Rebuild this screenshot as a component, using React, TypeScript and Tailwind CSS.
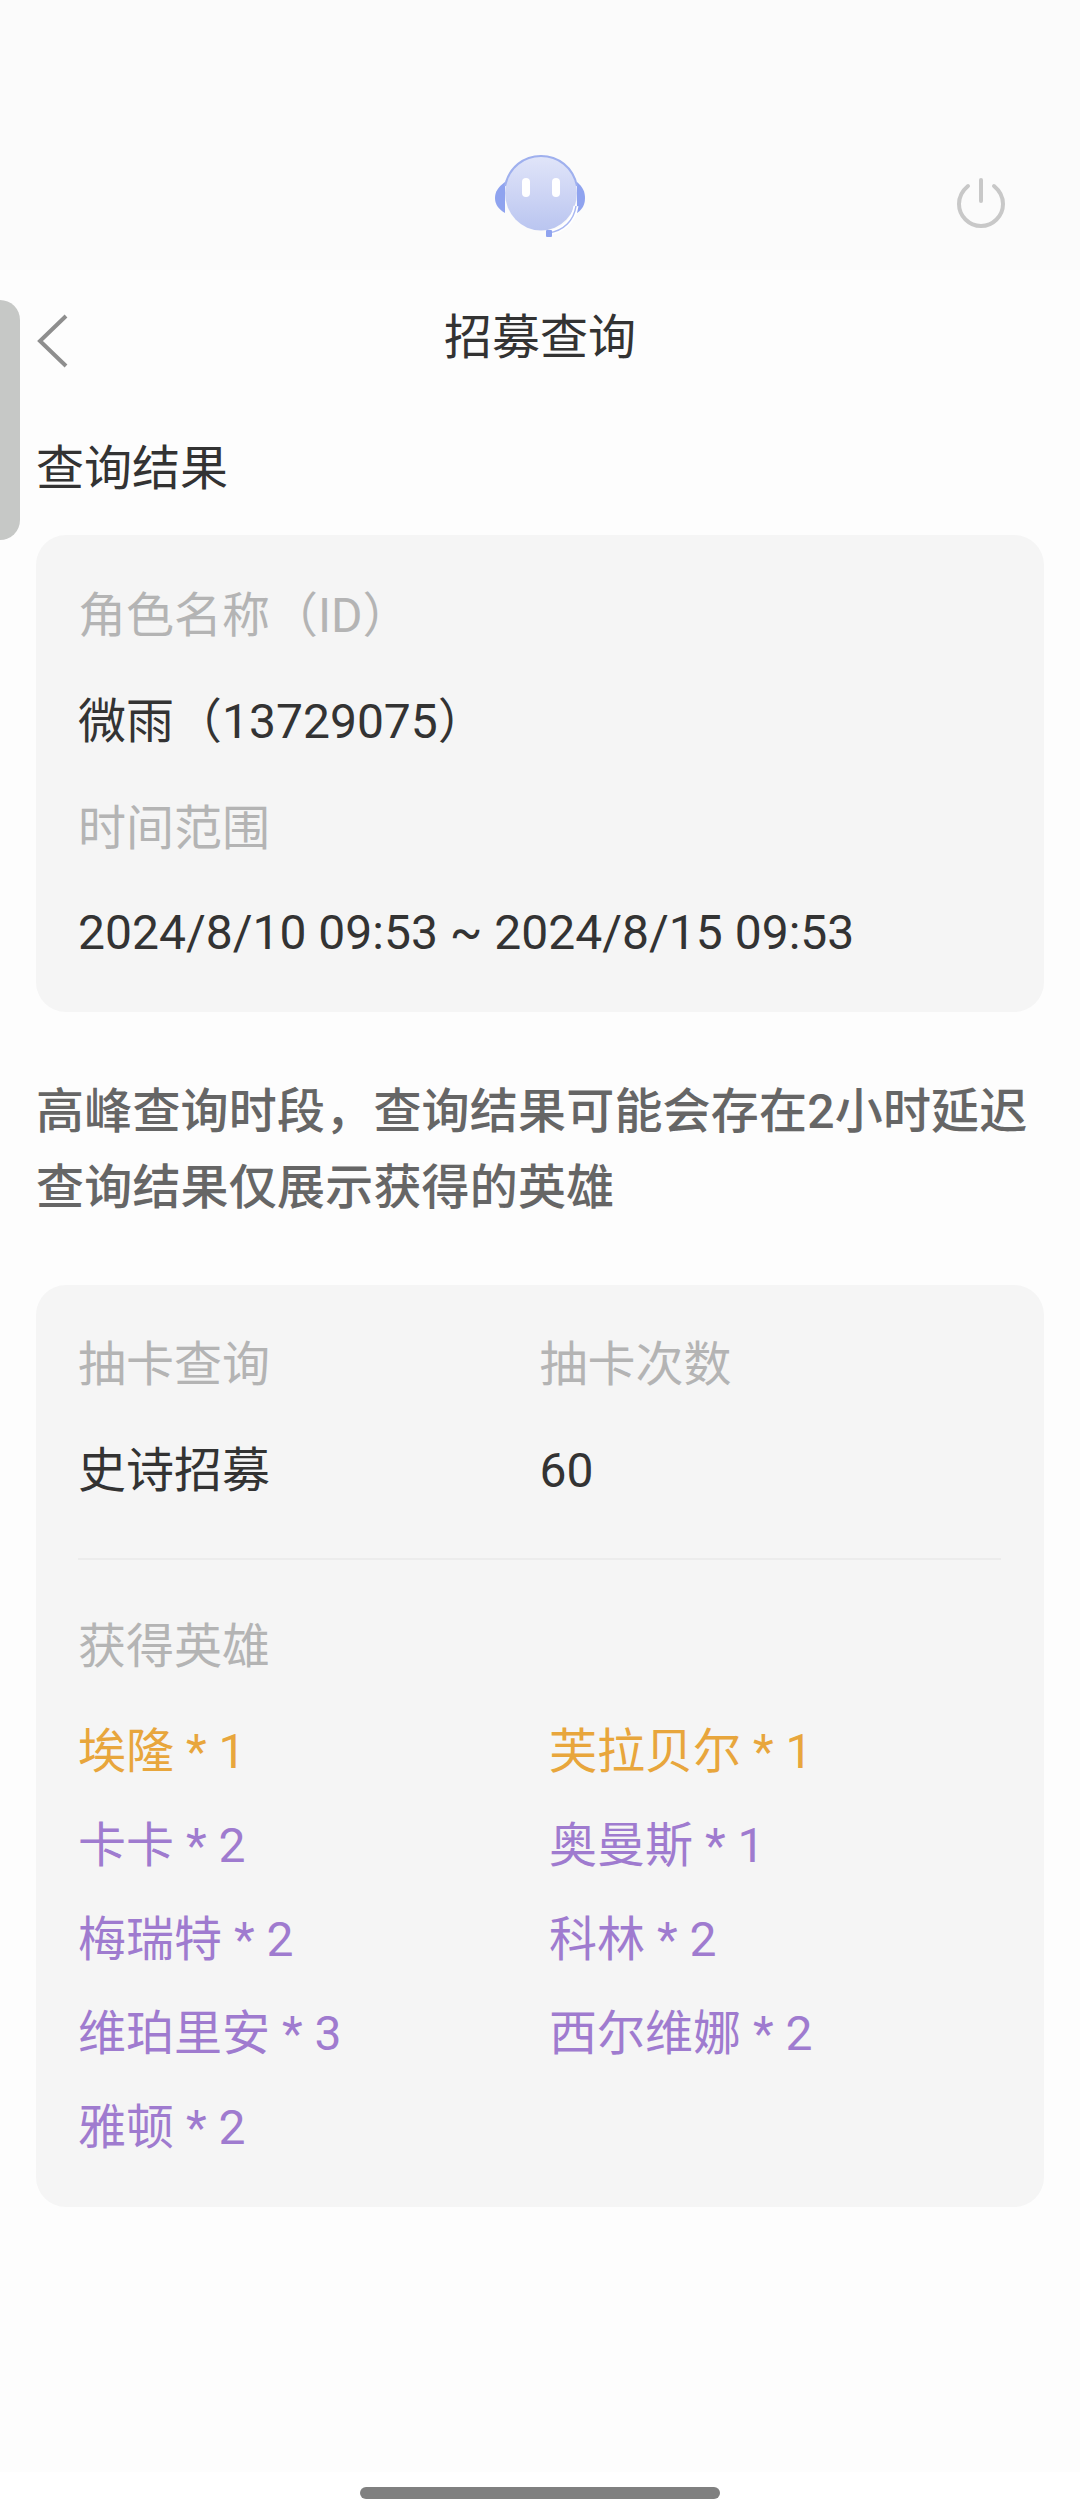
const font = { fontFamily: '"Roboto", "Noto Sans CJK SC", sans-serif' };

const heroes = [
  { name: "埃隆", count: 1, gold: true },
  { name: "芙拉贝尔", count: 1, gold: true },
  { name: "卡卡", count: 2 },
  { name: "奥曼斯", count: 1 },
  { name: "梅瑞特", count: 2 },
  { name: "科林", count: 2 },
  { name: "维珀里安", count: 3 },
  { name: "西尔维娜", count: 2 },
  { name: "雅顿", count: 2 },
];

const BotLogo = () => (
  <svg width="92" height="84" viewBox="0 0 92 84" fill="none" className="blur-[0.6px]">
    <defs>
      <linearGradient id="face" x1="0" y1="0" x2="0" y2="1">
        <stop offset="0" stopColor="#e1e5f9" />
        <stop offset="1" stopColor="#bac5f0" />
      </linearGradient>
    </defs>
    <path d="M11 28C4 33 1 38 1 44c0 6 3 11 10 15z" fill="#8fa3ef" />
    <path d="M83 28c6 5 8 10 8 16 0 6-2 11-8 15z" fill="#8fa3ef" />
    <ellipse cx="47" cy="39" rx="36" ry="37.5" fill="url(#face)" />
    <path d="M11 32C15 13 30 2 47 2s32 11 36 30" stroke="#9fb0ee" strokeWidth="2" />
    <rect x="28" y="24" width="8" height="19" rx="4" fill="#fff" />
    <rect x="58" y="24" width="8" height="19" rx="4" fill="#fff" />
    <path d="M82 52c-2 14-12 25-28 27" stroke="#fff" strokeWidth="5" />
    <path d="M82 52c-2 14-12 25-28 27" stroke="#a9b7f1" strokeWidth="1.5" />
    <rect x="52" y="76" width="6" height="7" rx="1" fill="#8fa3ef" />
  </svg>
);

const PowerIcon = () => (
  <svg width="48" height="50" viewBox="0 0 48 50" fill="none" stroke="#c8c8c8" strokeWidth="4" strokeLinecap="round">
    <path d="M11 8C5 13 2 19 2 26c0 12 10 22 22 22s22-10 22-22c0-7-3-13-9-18" />
    <path d="M24 2v21" />
  </svg>
);

const BackIcon = () => (
  <svg width="32" height="54" viewBox="0 0 32 54" fill="none" stroke="#8e8e8e" strokeWidth="4">
    <path d="M30 2 4 27l26 25" />
  </svg>
);

export default function App() {
  return (
    <div className="relative w-[1080px] h-[2520px] flex flex-col bg-[#fdfdfd] overflow-hidden text-[#333333]" style={font}>
      {/* side handle */}
      <div className="absolute left-0 top-[300px] w-[20px] h-[240px] bg-[#c6c8c6] rounded-r-[20px]" />

      <main className="flex-1">
        <div className="h-[270px] bg-[#fbfbfb] flex items-start justify-center relative pt-[154px]">
          <BotLogo />
          <div className="absolute right-[75px] top-[178px]">
            <PowerIcon />
          </div>
        </div>

        <div className="relative h-[132px] flex items-center justify-center">
          <div className="absolute left-[36px] top-[44px] flex">
            <BackIcon />
          </div>
          <h1 className="text-[48px] leading-[66px] pt-[4px] font-normal">招募查询</h1>
        </div>

        <div className="px-[36px]">
          <p className="text-[48px] leading-[66px] h-[133px] pt-[34px]">查询结果</p>

          <section className="bg-[#f5f5f5] rounded-[30px] h-[477px] pl-[42px] pr-[43px] pt-[48px] text-[48px] leading-[66px]">
            <p className="text-[#b4b4b4] h-[106px]">角色名称（ID）</p>
            <p className="h-[107px]">微雨（13729075）</p>
            <p className="text-[#b4b4b4] h-[104px]">时间范围</p>
            <p>2024/8/10 09:53 ~ 2024/8/15 09:53</p>
          </section>

          <div className="mt-[62px] text-[48px] leading-[76px] font-medium tracking-[0.2px] text-[#666666] h-[211px] whitespace-nowrap">
            <p>高峰查询时段，查询结果可能会存在2小时延迟</p>
            <p>查询结果仅展示获得的英雄</p>
          </div>

          <section className="bg-[#f5f5f5] rounded-[30px] h-[922px] pl-[42px] pr-[43px] pt-[47px] text-[48px] leading-[66px]">
            <div className="grid grid-cols-2 text-[#b4b4b4] h-[106px]">
              <p>抽卡查询</p>
              <p>抽卡次数</p>
            </div>
            <div className="grid grid-cols-2 h-[66px]">
              <p>史诗招募</p>
              <p>60</p>
            </div>
            <div className="mt-[54px] h-[2px] bg-[#ececec]" />
            <p className="text-[#b4b4b4] mt-[54px] h-[105px]">获得英雄</p>
            <ul className="grid grid-cols-[471px_1fr] gap-y-[28px]">
              {heroes.map((h) => (
                <li key={h.name} className={h.gold ? "text-[#e8a63c]" : "text-[#9f7bcf]"}>
                  {h.name} * {h.count}
                </li>
              ))}
            </ul>
          </section>
        </div>
      </main>

      {/* home indicator */}
      <footer className="h-[48px] bg-white flex justify-center pt-[15px]">
        <div className="w-[360px] h-[12px] rounded-full bg-[#808080]" />
      </footer>
    </div>
  );
}
